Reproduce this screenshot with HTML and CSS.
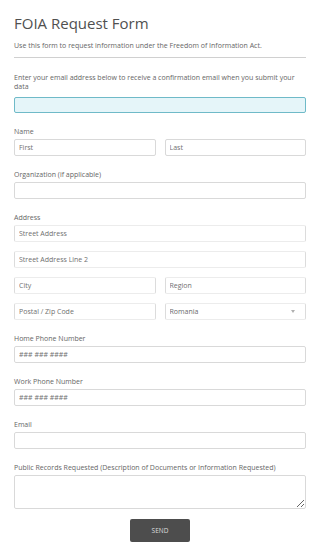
FILE: index.html
```html
<!DOCTYPE html>
<html lang="en">
<head>
    <meta charset="UTF-8">
    <meta name="viewport" content="width=device-width, initial-scale=1.0">
    <title>FOIA Request Form</title>
    <link rel="stylesheet" href="styles.css">
</head>
<body>
    <div class="container">
        <h2>FOIA Request Form</h2>
        <p class="intro">Use this form to request information under the Freedom of Information Act.</p>
        <hr>

        <div class="field">
            <label class="label-wrap">Enter your email address below to receive a confirmation email when you submit your data</label>
            <input type="text" class="confirm">
        </div>

        <div class="field">
            <label>Name</label>
            <div class="row">
                <input type="text" placeholder="First">
                <input type="text" placeholder="Last">
            </div>
        </div>

        <div class="field">
            <label>Organization (if applicable)</label>
            <input type="text">
        </div>

        <div class="field address">
            <label>Address</label>
            <input type="text" placeholder="Street Address">
            <input type="text" placeholder="Street Address Line 2">
            <div class="row">
                <input type="text" placeholder="City">
                <input type="text" placeholder="Region">
            </div>
            <div class="row">
                <input type="text" placeholder="Postal / Zip Code">
                <div class="select-box">
                    <select>
                        <option>Romania</option>
                    </select>
                    <span class="caret"></span>
                </div>
            </div>
        </div>

        <div class="field">
            <label>Home Phone Number</label>
            <input type="text" placeholder="### ### ####">
        </div>

        <div class="field">
            <label>Work Phone Number</label>
            <input type="text" placeholder="### ### ####">
        </div>

        <div class="field">
            <label>Email</label>
            <input type="text">
        </div>

        <div class="field">
            <label>Public Records Requested (Description of Documents or Information Requested)</label>
            <textarea></textarea>
        </div>

        <div class="actions">
            <button type="button">SEND</button>
        </div>
    </div>
</body>
</html>
```

FILE: styles.css
```css
* {
    box-sizing: border-box;
}
body {
    margin: 0;
    font-family: "Open Sans", Arial, sans-serif;
    color: #666;
    background: #fff;
}
.container {
    padding: 12px 14px 0 14px;
}
h2 {
    margin: 0;
    font-size: 15px;
    font-weight: 400;
    line-height: 22px;
    color: #505050;
}
.intro {
    margin: 7px 0 0 0;
    font-size: 7px;
    line-height: 10px;
    color: #666;
}
hr {
    margin: 6px 0 15px 0;
    border: none;
    border-top: 1px solid #d0d0d0;
}
.field {
    margin-bottom: 14px;
}
label {
    display: block;
    font-size: 7px;
    line-height: 9px;
    margin-bottom: 3px;
    color: #666;
}
.label-wrap {
    margin-bottom: 6px;
}
input, select, textarea {
    display: block;
    width: 100%;
    height: 17px;
    padding: 0 4px;
    border: 1px solid #d9d9d9;
    border-radius: 2px;
    background: #fff;
    font-family: "Open Sans", Arial, sans-serif;
    font-size: 7px;
    color: #6a6a6a;
    outline: none;
}
input::placeholder {
    color: #707070;
}
.confirm {
    height: 16px;
    background: #e5f5f9;
    border-color: #6fbac8;
}
.row {
    display: grid;
    grid-template-columns: minmax(0, 1fr) minmax(0, 1fr);
    column-gap: 9px;
}
.address input, .address .select-box {
    margin-bottom: 9px;
}
.address .row:last-child input, .address .row:last-child .select-box {
    margin-bottom: 0;
}
.address input, .address select {
    border-color: #ececec;
    border-left-color: #dcdcdc;
    border-right-color: #dcdcdc;
}
.select-box {
    position: relative;
}
select {
    appearance: none;
    -webkit-appearance: none;
}
.caret {
    position: absolute;
    right: 11px;
    top: 7px;
    border-left: 2.5px solid transparent;
    border-right: 2.5px solid transparent;
    border-top: 3px solid #b0b0b0;
}
textarea {
    height: 34px;
    resize: vertical;
}
.actions {
    display: flex;
    justify-content: center;
    margin-top: -4px;
}
button {
    width: 60px;
    height: 23px;
    border: none;
    border-radius: 2px;
    background: #4d4d4d;
    color: #ddd;
    font-family: "Open Sans", Arial, sans-serif;
    font-size: 6.5px;
}
```
